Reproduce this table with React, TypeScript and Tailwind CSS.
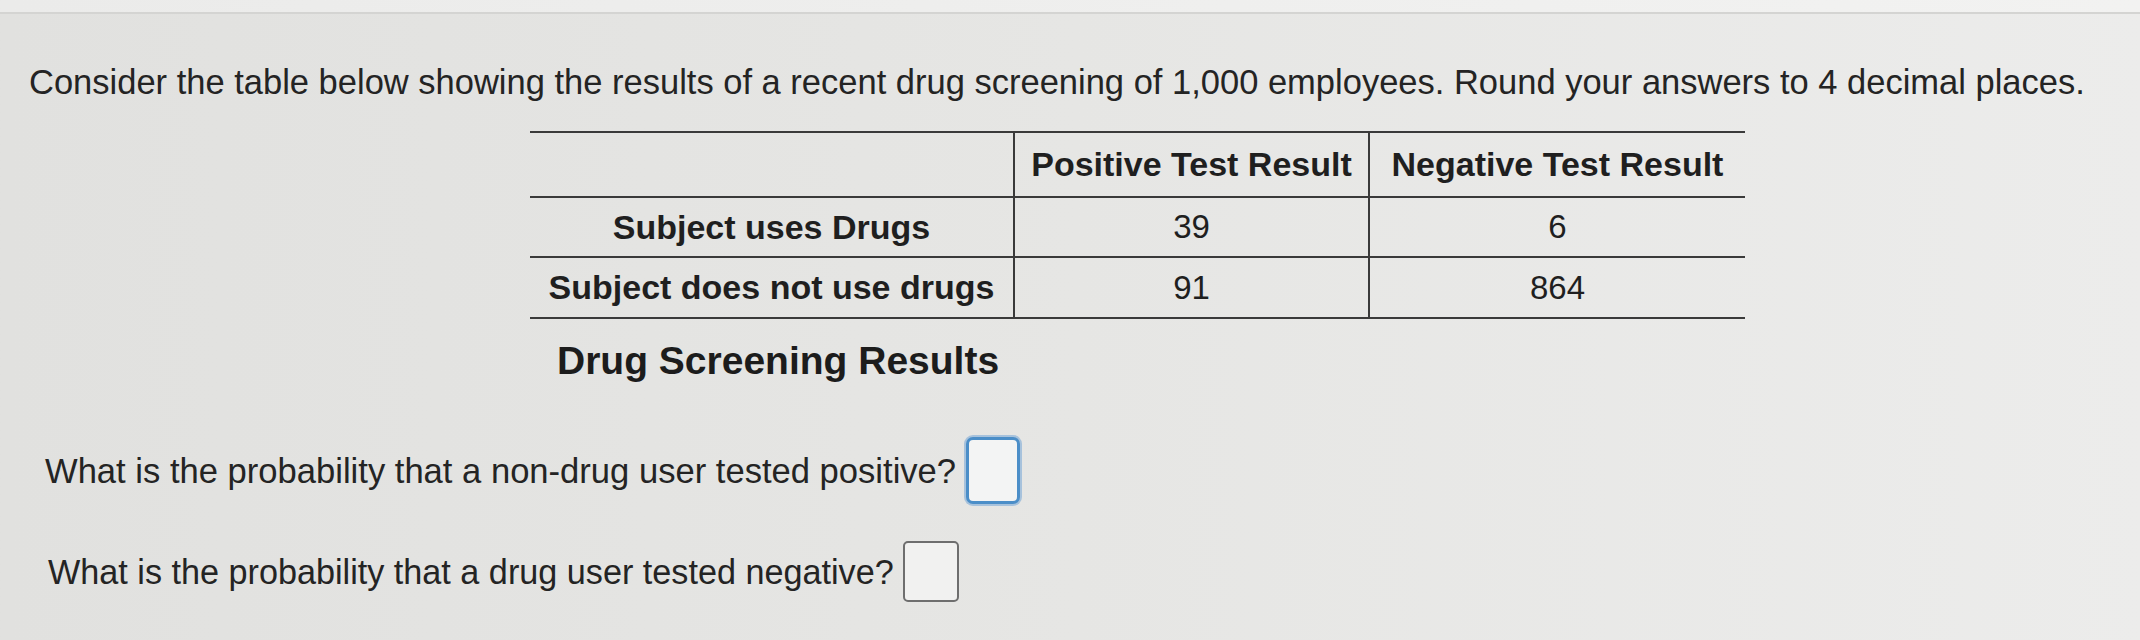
import React from "react";

export default function App() {
  return (
    <div
      className="w-[2140px] h-[640px] overflow-hidden bg-linear-to-r from-[#e1e1df] via-[#e6e6e4] to-[#ececeb] text-[#242424] flex flex-col"
      style={{ fontFamily: '"Liberation Sans", Arial, sans-serif' }}
    >
      <div className="h-[14px] shrink-0 bg-linear-to-r from-[#ebebea] to-[#f2f2f1] border-b-2 border-[#d4d4d2]" />

      <p className="mt-[48px] pl-[29px] text-[34.5px] leading-[40px] whitespace-nowrap">
        Consider the table below showing the results of a recent drug screening of 1,000 employees. Round your answers to 4 decimal places.
      </p>

      <div className="ml-[530px] mt-[29px]">
        <table className="table-fixed border-collapse w-[1215px] caption-bottom text-[#1f1f1f]">
          <colgroup>
            <col className="w-[484px]" />
            <col className="w-[355px]" />
            <col className="w-[376px]" />
          </colgroup>
          <caption className="text-left pl-[27px] pt-[20px] text-[39px] leading-[44px] font-bold text-[#1c1c1c]">
            Drug Screening Results
          </caption>
          <thead>
            <tr className="h-[65px] border-t-2 border-b-2 border-[#3a3a3a]">
              <th className="border-r-2 border-[#3a3a3a]" />
              <th className="border-r-2 border-[#3a3a3a] text-[34px] font-bold text-center">
                Positive Test Result
              </th>
              <th className="text-[34px] font-bold text-center">Negative Test Result</th>
            </tr>
          </thead>
          <tbody className="text-[33px]">
            <tr className="h-[60px] border-b-2 border-[#3a3a3a]">
              <td className="border-r-2 border-[#3a3a3a] text-[34px] font-bold text-center">Subject uses Drugs</td>
              <td className="border-r-2 border-[#3a3a3a] text-center">39</td>
              <td className="text-center">6</td>
            </tr>
            <tr className="h-[61px] border-b-2 border-[#3a3a3a]">
              <td className="border-r-2 border-[#3a3a3a] text-[34px] font-bold text-center">Subject does not use drugs</td>
              <td className="border-r-2 border-[#3a3a3a] text-center">91</td>
              <td className="text-center">864</td>
            </tr>
          </tbody>
        </table>
      </div>

      <div className="mt-[54px] pl-[45px] flex items-center gap-[10px]">
        <span className="text-[34.6px] leading-[40px] whitespace-nowrap">
          What is the probability that a non-drug user tested positive?
        </span>
        <div className="w-[54px] h-[67px] rounded-[7px] border-[3px] border-[#4b8ec8] bg-[#f3f4f4] shadow-[0_0_0_2px_rgba(90,150,210,0.45)]" />
      </div>

      <div className="mt-[37px] pl-[48px] flex items-center gap-[9px]">
        <span className="text-[34.2px] leading-[40px] whitespace-nowrap">
          What is the probability that a drug user tested negative?
        </span>
        <div className="w-[56px] h-[61px] rounded-[5px] border-2 border-[#6e6e6e] bg-[#f1f1f0]" />
      </div>
    </div>
  );
}
